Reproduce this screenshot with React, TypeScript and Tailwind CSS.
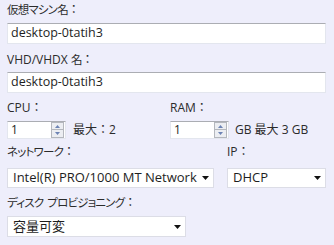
import React from "react";

function Label({ children, className = "" }: { children: React.ReactNode; className?: string }) {
  return (
    <div className={"h-[18px] leading-[18px] text-[12px] text-[#2b2b2b] whitespace-nowrap flex items-center " + className}>{children}</div>
  );
}

function K({ children, className = "" }: { children: React.ReactNode; className?: string }) {
  return <span className={"text-[11.5px] tracking-[-0.8px] [font-feature-settings:'palt'] " + className}>{children}</span>;
}

function C() {
  return <span className="text-[12px]">：</span>;
}

function TextBox({ value, className = "" }: { value: string; className?: string }) {
  return (
    <div
      className={
        "h-[21px] bg-white border border-[#e3e6ee] border-t-[#abadb3] flex items-center pl-[3px] text-[12.5px] text-[#1e1e1e] " +
        className
      }
    >
      {value}
    </div>
  );
}

function Spin({ value }: { value: string }) {
  return (
    <div className="w-[59px] h-[18px] bg-white border border-[#e3e6ee] border-t-[#abadb3] flex items-center">
      <div className="flex-1 pl-[3px] text-[12px] text-[#1e1e1e] leading-none">{value}</div>
      <div className="w-[13px] h-[16px] mr-[1px] flex flex-col gap-0">
        <div className="h-[8px] bg-[#eceef2] border border-[#b4b7bd] flex items-center justify-center">
          <svg width="5" height="3" viewBox="0 0 5 3"><path d="M0 3 L2.5 0 L5 3 Z" fill="#6d84b4" /></svg>
        </div>
        <div className="h-[8px] bg-[#eceef2] border border-t-0 border-[#b4b7bd] flex items-center justify-center">
          <svg width="5" height="3" viewBox="0 0 5 3"><path d="M0 0 L2.5 3 L5 0 Z" fill="#6d84b4" /></svg>
        </div>
      </div>
    </div>
  );
}

function Select({ value, className = "" }: { value: string; className?: string }) {
  return (
    <div
      className={
        "bg-white border border-[#dcdde6] flex items-center pl-[5px] pr-[4px] text-[13px] text-[#1e1e1e] " +
        className
      }
    >
      <span className="flex-1 whitespace-nowrap overflow-hidden">{value}</span>
      <svg width="7" height="4" viewBox="0 0 7 4"><path d="M0 0 L7 0 L3.5 4 Z" fill="#111" /></svg>
    </div>
  );
}

export default function App() {
  return (
    <div className="w-[334px] h-[245px] bg-[#eeeefb] px-[7px] pt-[1px] flex flex-col font-['Open_Sans','Noto_Sans_CJK_JP',sans-serif]">
      <Label><K>仮想マシン名</K><C /></Label>
      <TextBox value="desktop-0tatih3" className="mt-[4px] w-[319px]" />
      <Label className="mt-[7px]">VHD/VHDX&nbsp;<K>名</K><C /></Label>
      <TextBox value="desktop-0tatih3" className="mt-[3px] w-[319px]" />
      <div className="mt-[6px] flex">
        <Label className="w-[163px]">CPU<C /></Label>
        <Label>RAM<C /></Label>
      </div>
      <div className="mt-[4px] flex h-[18px]">
        <div className="w-[163px] flex items-center gap-[7px]">
          <Spin value="1" />
          <span className="text-[12px] text-[#2b2b2b]">最大：2</span>
        </div>
        <div className="flex items-center gap-[6px]">
          <Spin value="1" />
          <span className="text-[12px] text-[#2b2b2b]">GB 最大 3 GB</span>
        </div>
      </div>
      <div className="mt-[4px] flex">
        <Label className="w-[220px]"><K>ネットワーク</K><C /></Label>
        <Label>IP<C /></Label>
      </div>
      <div className="mt-[7px] flex gap-[13px]">
        <Select value="Intel(R) PRO/1000 MT Network" className="w-[207px] h-[20px]" />
        <Select value="DHCP" className="w-[99px] h-[20px]" />
      </div>
      <Label className="mt-[6px]"><K>ディスク</K><K className="ml-[4px]">プロビジョニング</K><C /></Label>
      <Select value="容量可変" className="mt-[4px] w-[179px] h-[21px]" />
    </div>
  );
}
